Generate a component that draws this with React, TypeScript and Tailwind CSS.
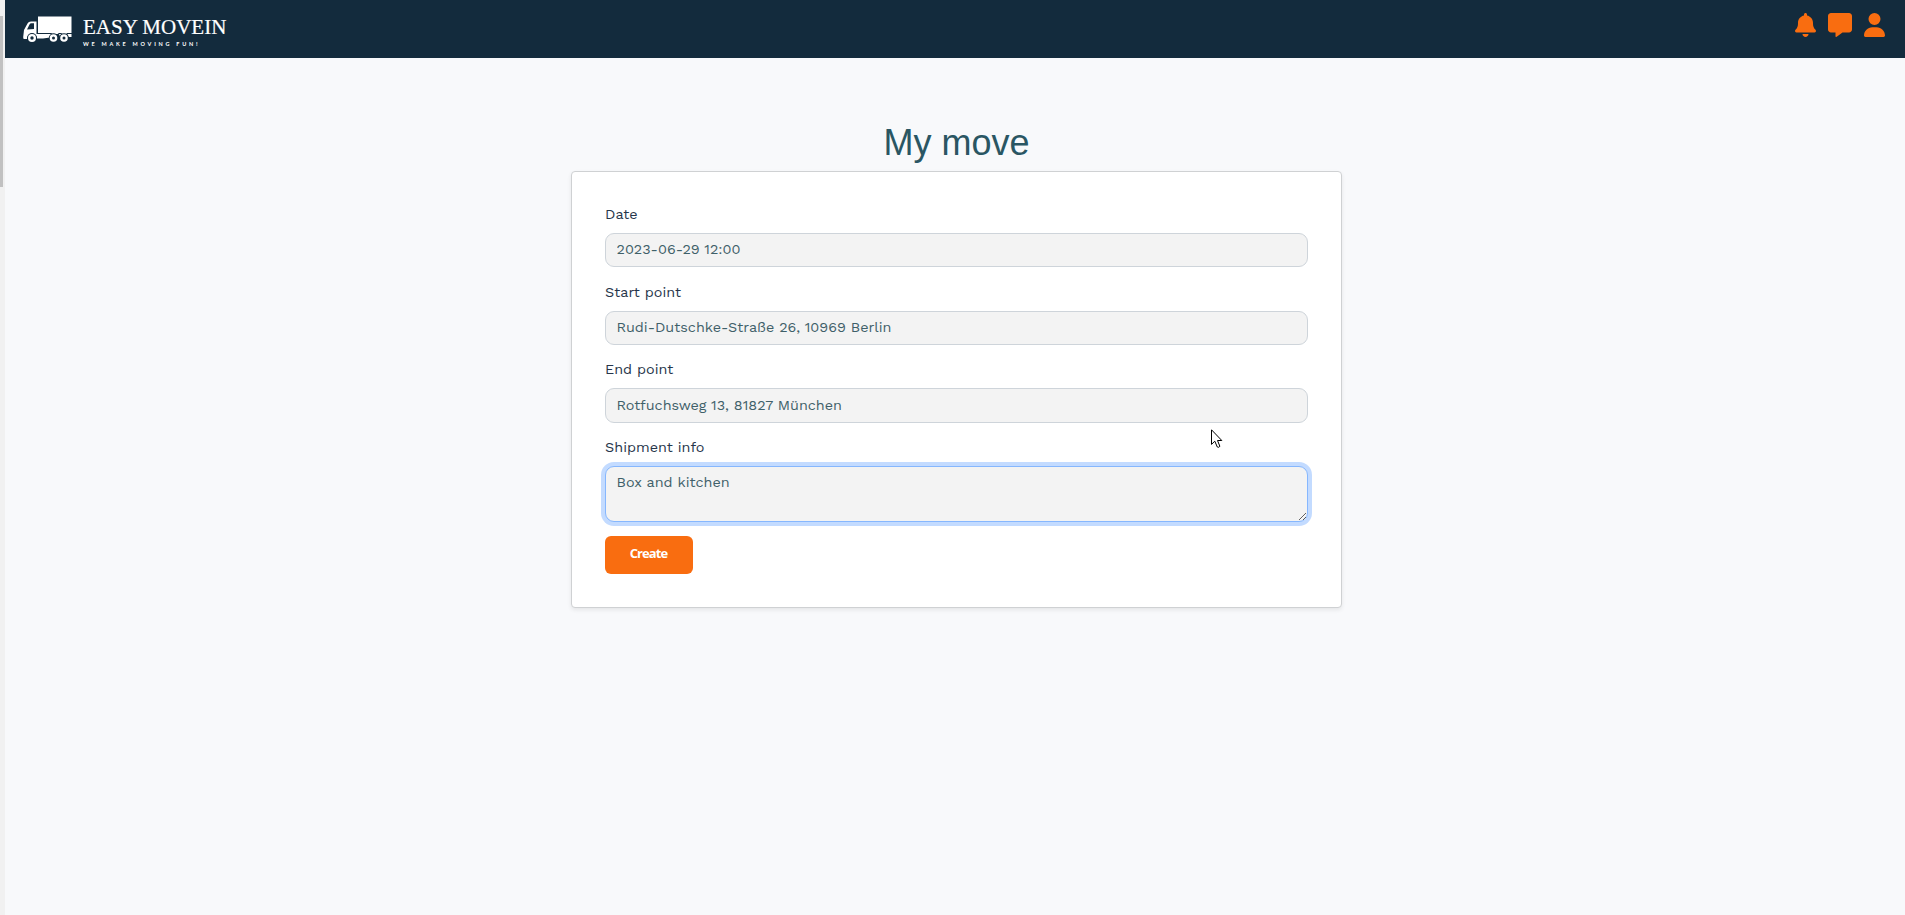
import { FaBell, FaMessage, FaUser } from "react-icons/fa6";

function Truck() {
  return (
    <svg className="h-[27px] w-[50px]" viewBox="0 0 50 27" fill="#fff">
      <path d="M15 .5H48.5V17H15Z" />
      <path d="M15 18H48.5V21H45.5A4.2 4.2 0 0 0 37 21A4.2 4.2 0 0 0 27 21.5L20 22.5H14A5 5 0 0 0 4 23H1Q0 23 .2 21L1 14L4.5 7.5Q5.5 5.5 8 5.5H13.5V18Z" />
      <path d="M4 13.5L6.5 8.5Q7 7.3 8.5 7.3H11V13Z" fill="#132b3d" />
      <circle cx="9" cy="22" r="5" fill="#132b3d" />
      <circle cx="9" cy="22" r="4" />
      <circle cx="9" cy="22" r="1.7" fill="#132b3d" />
      <circle cx="30.5" cy="22" r="4.7" fill="#132b3d" />
      <circle cx="41" cy="22" r="4.7" fill="#132b3d" />
      <circle cx="30.5" cy="22" r="3.8" />
      <circle cx="30.5" cy="22" r="1.5" fill="#132b3d" />
      <circle cx="41" cy="22" r="3.8" />
      <circle cx="41" cy="22" r="1.5" fill="#132b3d" />
    </svg>
  );
}

const control =
  "block w-full rounded-[9px] border border-[#ced4da] bg-[#f3f3f3] px-[10.5px] pb-[2px] text-[14.4px] text-[#3f6069] outline-none";
const label = "flex h-[21px] items-center text-[14.4px] text-[#26354a]";

export default function App() {
  return (
    <div className="flex h-[915px] w-full overflow-hidden bg-[#f8f9fb] font-['Work_Sans','Inter',sans-serif]">
      <div className="w-[5px] shrink-0 bg-[#f1f1f1] pt-4">
        <div className="h-[171px] w-[3px] bg-[#c1c1c1]" />
      </div>
      <div className="min-w-0 flex-1">
        <header className="flex h-[58px] items-start justify-between bg-[#132b3d] pr-5 pl-[18px]">
          <div className="flex pt-4">
            <Truck />
            <div className="ml-[10px] text-white">
              <div className="-mt-px h-[25px] font-['Liberation_Serif',serif] text-[21px] leading-[24px] whitespace-nowrap [-webkit-text-stroke:0.2px_white]">
                EASY MOVEIN
              </div>
              <div className="h-[8px] font-['Lato',sans-serif] text-[5.5px] leading-[8px] font-bold tracking-[2.75px] whitespace-nowrap">
                WE MAKE MOVING FUN!
              </div>
            </div>
          </div>
          <div className="flex items-center gap-[12px] pt-[13px] text-[#f96d10]">
            <FaBell className="h-[24px] w-[21px]" />
            <FaMessage className="size-[24px]" />
            <FaUser className="h-[24px] w-[21px]" />
          </div>
        </header>
        <main className="ml-[566px] w-[771px] pt-[65px]">
          <h1 className="h-[48px] text-center font-['Liberation_Sans',sans-serif] text-[36px] leading-[40px] text-[#2a5663]">
            My move
          </h1>
          <form className="h-[437px] rounded border border-[#cfd1d3] bg-white px-[33px] pt-[32px] shadow-[0_2px_4px_rgba(0,0,0,0.08)]">
            <label className={label}>Date</label>
            <input className={control + " mt-[8px] h-[34px]"} defaultValue="2023-06-29 12:00" />
            <label className={label + " mt-[15px]"}>Start point</label>
            <input className={control + " mt-[8px] h-[34px]"} defaultValue="Rudi-Dutschke-Straße 26, 10969 Berlin" />
            <label className={label + " mt-[14px]"}>End point</label>
            <input className={control + " mt-[8px] h-[35px]"} defaultValue="Rotfuchsweg 13, 81827 München" />
            <label className={label + " mt-[14px]"}>Shipment info</label>
            <textarea
              className="mt-[8px] block h-[56px] w-full rounded-[9px] border border-[#86b7fe] bg-[#f3f3f3] px-[10.5px] pt-[4px] text-[14.4px] leading-[22px] text-[#3f6069] shadow-[0_0_0_4px_#c3dbff] outline-none"
              defaultValue="Box and kitchen"
            />
            <button
              type="button"
              className="mt-[14px] flex h-[38px] w-[88px] items-center justify-center rounded-[6px] bg-[#f96d10] pr-px pb-[2px] font-['Open_Sans',sans-serif] text-[13px] font-bold tracking-[-0.9px] text-white"
            >
              Create
            </button>
          </form>
        </main>
      </div>
      <svg className="absolute top-[429px] left-[1211px] h-[20px] w-[12px]" viewBox="0 0 12 20">
        <path d="M.5 .8V15.4L3.8 12.2L6.3 18Q7.6 19 8.9 17.3L6.5 11.5H10.8Z" fill="#fff" stroke="#000" />
      </svg>
    </div>
  );
}
